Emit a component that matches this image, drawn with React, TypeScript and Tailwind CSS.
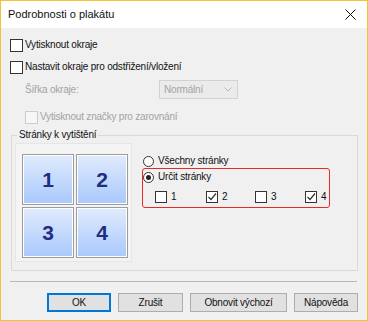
import React from "react";

const Check = ({ checked = false, disabled = false, size = 13 }: { checked?: boolean; disabled?: boolean; size?: number }) => (
  <span
    className={`flex items-center justify-center shrink-0 border ${
      disabled ? "border-[#cccccc] bg-[#f7f7f7]" : "border-[#333333] bg-white"
    }`}
    style={{ width: size, height: size }}
  >
    {checked && (
      <svg width="10" height="10" viewBox="0 0 10 10">
        <polyline points="1.5,5 4,7.5 9,1.5" fill="none" stroke="#333" strokeWidth="1.2" />
      </svg>
    )}
  </span>
);

const Radio = ({ checked = false }: { checked?: boolean }) => (
  <span className="flex items-center justify-center w-[11px] h-[11px] shrink-0 rounded-full border border-[#333333] bg-white">
    {checked && <span className="w-[5px] h-[5px] rounded-full bg-[#222]" />}
  </span>
);

const Tile = ({ n }: { n: number }) => (
  <div className="flex items-center justify-center h-[51px] w-[52px] border border-[#9c9c9c] bg-gradient-to-b from-[#e0ebfd] to-[#a9c8fb] shadow-[inset_0_0_0_1px_#ffffff] text-[21px] font-bold text-[#1f2d84] leading-none">
    {n}
  </div>
);

const Btn = ({ label, w, primary = false }: { label: string; w: string; primary?: boolean }) => (
  <div
    className={`flex items-center justify-center h-[19px] ${w} bg-[#e1e1e1] ${
      primary ? "border-2 border-[#0078d7]" : "border border-[#adadad]"
    }`}
  >
    {label}
  </div>
);

export default function App() {
  return (
    <div className="w-[368px] h-[321px] flex flex-col border border-[#efc23a] bg-[#f0f0f0] text-[10px] tracking-[-0.2px] text-[#111] font-['Liberation_Sans',Arial,sans-serif] leading-none">
      {/* Title bar */}
      <div className="flex items-center justify-between h-[27px] bg-white pl-[7px] pr-[11px] shrink-0">
        <span className="text-[11px] tracking-normal">Podrobnosti o plakátu</span>
        <svg width="11" height="11" viewBox="0 0 11 11">
          <path d="M0.5 0.5 L10.5 10.5 M10.5 0.5 L0.5 10.5" stroke="#111" strokeWidth="1" />
        </svg>
      </div>

      {/* Options */}
      <div className="flex items-center gap-[2px] h-[22px] pl-[9px] mt-[6px]">
        <Check />
        <span>Vytisknout okraje</span>
      </div>
      <div className="flex items-center gap-[2px] h-[22px] pl-[9px]">
        <Check />
        <span>Nastavit okraje pro odstřižení/vložení</span>
      </div>
      <div className="flex items-center h-[19px] pl-[24px] mt-[2px]">
        <span className="w-[134px] text-[#a3a3a3]">Šířka okraje:</span>
        <div className="flex items-center justify-between w-[79px] h-[19px] border border-[#d2d2d2] bg-[#ebebeb] pl-[4px] pr-[5px]">
          <span className="text-[#a3a3a3]">Normální</span>
          <svg width="8" height="5" viewBox="0 0 8 5">
            <polyline points="0.5,0.5 4,4 7.5,0.5" fill="none" stroke="#b5b5b5" strokeWidth="1" />
          </svg>
        </div>
      </div>
      <div className="flex items-center gap-[2px] h-[22px] pl-[24px] mt-[7px]">
        <Check disabled />
        <span className="text-[#a3a3a3]">Vytisknout značky pro zarovnání</span>
      </div>

      {/* Pages group */}
      <fieldset className="ml-[10px] mt-[2px] w-[347px] border border-[#d9d9d9] h-[141px]">
        <legend className="ml-[5px] px-[2px]">Stránky k vytištění</legend>
        <div className="flex pl-[3px]">
          <div className="w-[117px] h-[119px] mt-[3px] border border-[#e6e6e6] bg-[#f4f4f4] pl-[6px] pt-[10px]">
            <div className="grid grid-cols-[52px_52px] gap-[2px]">
              <Tile n={1} />
              <Tile n={2} />
              <Tile n={3} />
              <Tile n={4} />
            </div>
          </div>
          <div className="flex flex-col ml-[10px] mt-[14px]">
            <div className="flex items-center gap-[4px] h-[14px] pl-[1px]">
              <Radio />
              <span>Všechny stránky</span>
            </div>
            <div className="w-[188px] border border-[#e52a2a] rounded-[3px] pt-[1px] pb-[4px]">
              <div className="flex items-center gap-[4px] h-[14px]">
                <Radio checked />
                <span>Určit stránky</span>
              </div>
              <div className="grid grid-cols-[51px_49px_50px_40px] mt-[6px] pl-[12px]">
                {[1, 2, 3, 4].map((n) => (
                  <div key={n} className="flex items-center gap-[4px] h-[13px]">
                    <Check size={12} checked={n % 2 === 0} />
                    <span>{n}</span>
                  </div>
                ))}
              </div>
            </div>
          </div>
        </div>
      </fieldset>

      {/* Separator */}
      <div className="ml-[9px] mr-[10px] mt-[10px] border-t border-[#b9b9b9]" />

      {/* Buttons */}
      <div className="flex justify-end gap-[7px] pr-[9px] mt-[11px]">
        <Btn label="OK" w="w-[64px]" primary />
        <Btn label="Zrušit" w="w-[65px]" />
        <Btn label="Obnovit výchozí" w="w-[97px]" />
        <Btn label="Nápověda" w="w-[64px]" />
      </div>
    </div>
  );
}
